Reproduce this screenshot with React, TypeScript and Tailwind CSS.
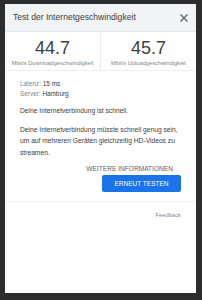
import React from 'react';

const font = { fontFamily: '"Liberation Sans", Arial, sans-serif' };

const Stat: React.FC<{ value: string; label: string; divider?: boolean }> = ({ value, label, divider }) => (
  <div className={`flex-1 flex flex-col items-center pt-[6px] ${divider ? 'border-r border-[#e8eaed]' : ''}`}>
    <div className="text-[18px] leading-[20px] text-[#3c4043]">{value}</div>
    <div className="text-[5.7px] leading-[8px] text-[#80868b] mt-[1px]">{label}</div>
  </div>
);

const App: React.FC = () => {
  return (
    <div className="w-[202px] h-[300px] bg-[#2d2d2d] pt-[4px] pl-[5px]" style={font}>
      <div className="w-[191px] h-[289px] bg-white flex flex-col">
        <div className="h-[28px] bg-[#f1f3f4] flex items-center justify-between pl-[8px] pr-[8px] border-b border-[#e3e5e8]">
          <span className="text-[8.6px] text-[#3c4043]">Test der Internetgeschwindigkeit</span>
          <svg width="8" height="8" viewBox="0 0 8 8">
            <path d="M1 1L7 7M7 1L1 7" stroke="#5f6368" strokeWidth="1.3" strokeLinecap="square" />
          </svg>
        </div>

        <div className="flex h-[39px] border-b border-[#eceef0]">
          <Stat value="44.7" label="Mbit/s Downloadgeschwindigkeit" divider />
          <Stat value="45.7" label="Mbit/s Uploadgeschwindigkeit" />
        </div>

        <div className="px-[15px] pt-[8px] text-[6.7px] text-[#3c4043]">
          <div className="leading-[10px] text-[6.4px]">
            <span className="text-[#80868b]">Latenz: </span>15 ms
          </div>
          <div className="leading-[10px] text-[6.4px]">
            <span className="text-[#80868b]">Server: </span>Hamburg
          </div>
          <p className="leading-[11.5px] mt-[6px]">Deine Internetverbindung ist schnell.</p>
          <p className="leading-[11.5px] mt-[7px]">
            Deine Internetverbindung müsste schnell genug sein, um auf mehreren Geräten gleichzeitig HD-Videos zu streamen.
          </p>
          <div className="flex justify-end mt-[6px] pr-[8px] text-[6.6px] text-[#5f6368] leading-[10px]">
            WEITERE INFORMATIONEN
          </div>
          <div className="flex justify-end mt-[1px]">
            <button className="w-[79px] h-[17px] rounded-[2px] bg-[#1a73e8] text-white text-[6.5px] leading-[17px]">
              ERNEUT TESTEN
            </button>
          </div>
        </div>

        <div className="mt-[9px] border-t border-[#eceef0] px-[15px] pt-[9px] flex justify-end">
          <span className="text-[5.8px] leading-[9px] text-[#80868b]">Feedback</span>
        </div>
      </div>
    </div>
  );
};

export default App;
